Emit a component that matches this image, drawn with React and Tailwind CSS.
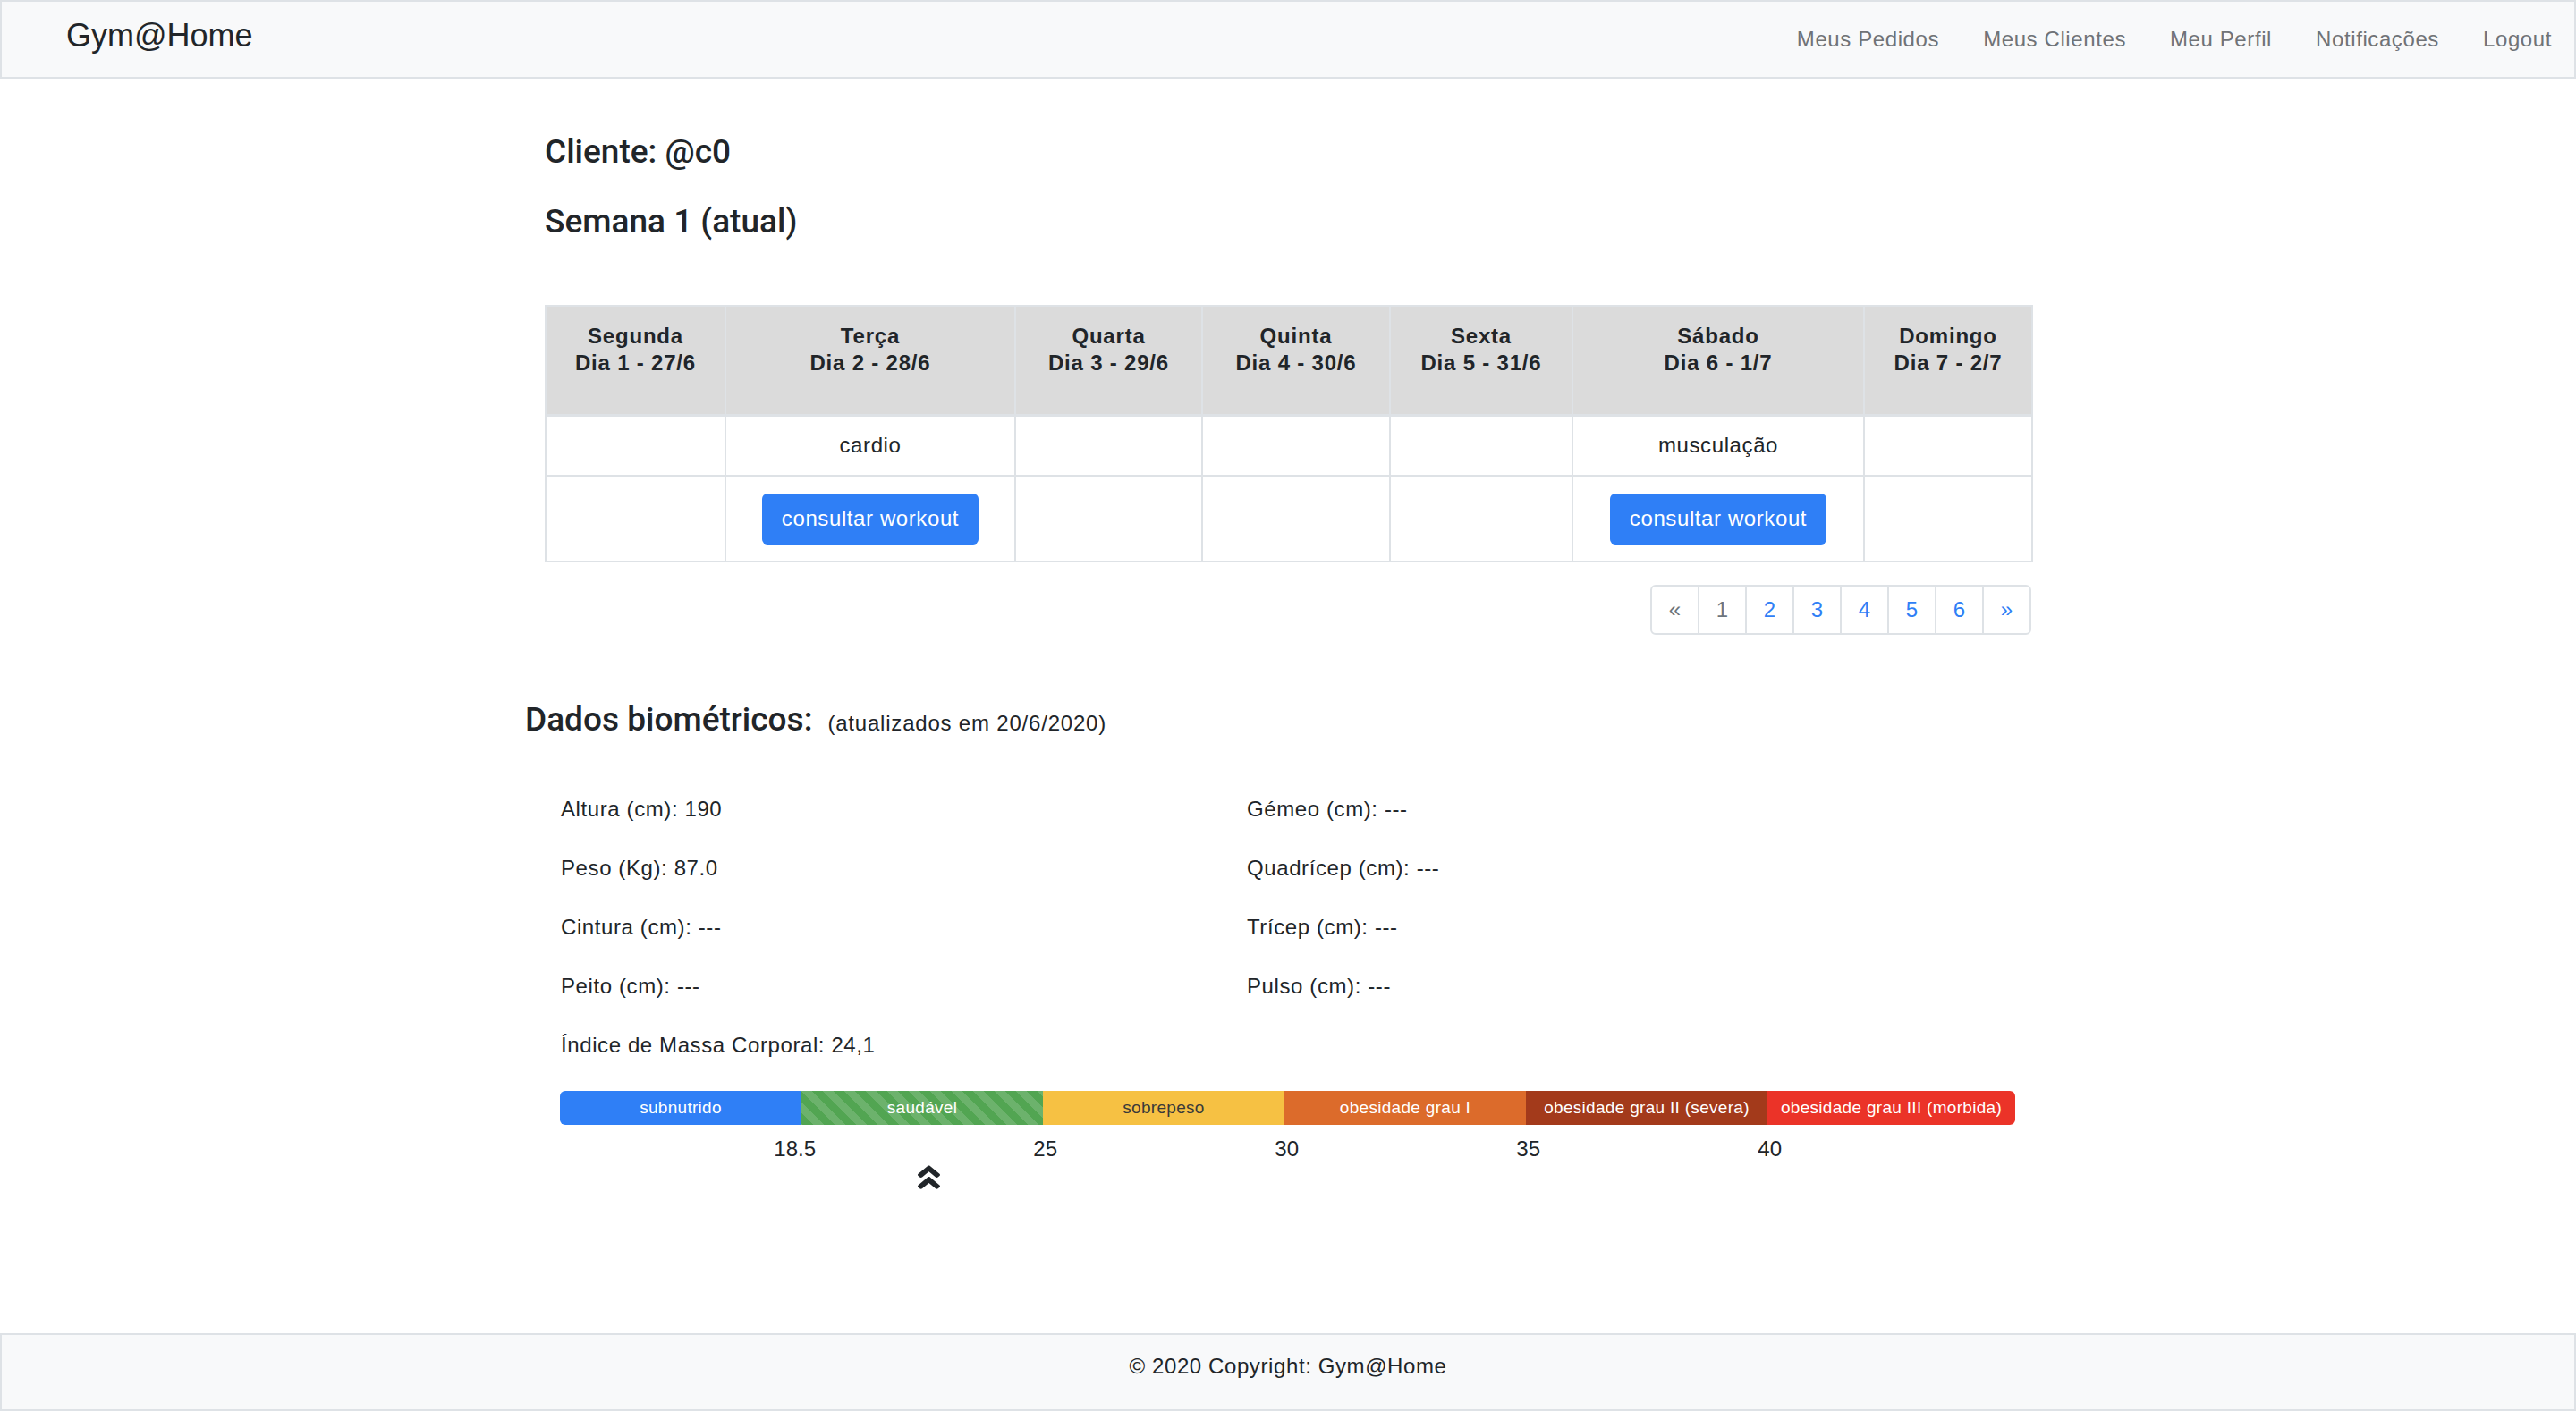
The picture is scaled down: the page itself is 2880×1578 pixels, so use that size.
import React from 'react';

const days = [
  { name: 'Segunda', label: 'Dia 1 - 27/6', type: '', w: 'w-[201px]' },
  { name: 'Terça', label: 'Dia 2 - 28/6', type: 'cardio', w: 'w-[324px]' },
  { name: 'Quarta', label: 'Dia 3 - 29/6', type: '', w: 'w-[209px]' },
  { name: 'Quinta', label: 'Dia 4 - 30/6', type: '', w: 'w-[210px]' },
  { name: 'Sexta', label: 'Dia 5 - 31/6', type: '', w: 'w-[204px]' },
  { name: 'Sábado', label: 'Dia 6 - 1/7', type: 'musculação', w: 'w-[326px]' },
  { name: 'Domingo', label: 'Dia 7 - 2/7', type: '', w: 'w-[188px]' },
];

const bioLeft = ['Altura (cm): 190', 'Peso (Kg): 87.0', 'Cintura (cm): ---', 'Peito (cm): ---', 'Índice de Massa Corporal: 24,1'];
const bioRight = ['Gémeo (cm): ---', 'Quadrícep (cm): ---', 'Trícep (cm): ---', 'Pulso (cm): ---'];

const stripes =
  'bg-[#52a552] bg-[image:linear-gradient(45deg,rgba(255,255,255,.15)_25%,transparent_25%,transparent_50%,rgba(255,255,255,.15)_50%,rgba(255,255,255,.15)_75%,transparent_75%,transparent)] bg-[length:24px_24px]';

const segments = [
  { label: 'subnutrido', cls: 'w-[270px] bg-[#2f7ff6] text-white' },
  { label: 'saudável', cls: `w-[270px] text-white ${stripes}` },
  { label: 'sobrepeso', cls: 'w-[270px] bg-[#f6c143] text-[#3a3a3a]' },
  { label: 'obesidade grau I', cls: 'w-[270px] bg-[#dc6b2b] text-white' },
  { label: 'obesidade grau II (severa)', cls: 'w-[270px] bg-[#a33a1b] text-white' },
  { label: 'obesidade grau III (morbida)', cls: 'w-[277px] bg-[#eb3328] text-white' },
];

const scale = ['18.5', '25', '30', '35', '40'];
const pages = ['«', '1', '2', '3', '4', '5', '6', '»'];

// heading font: medium weight, closer to the original system font
const heading = "font-['Roboto','Liberation_Sans',sans-serif] font-medium";

function DoubleUp() {
  return (
    <svg viewBox="0 50 320 410" preserveAspectRatio="none" className="w-[25px] h-[27px] ml-[400px]" fill="#212529">
      <path d="M177 255.7l136 136c9.4 9.4 9.4 24.6 0 33.9l-22.6 22.6c-9.4 9.4-24.6 9.4-33.9 0L160 351.9l-96.4 96.4c-9.4 9.4-24.6 9.4-33.9 0L7 425.7c-9.4-9.4-9.4-24.6 0-33.9l136-136c9.4-9.5 24.6-9.5 34-.1zm-34-192L7 199.7c-9.4 9.4-9.4 24.6 0 33.9l22.6 22.6c9.4 9.4 24.6 9.4 33.9 0l96.4-96.4 96.4 96.4c9.4 9.4 24.6 9.4 33.9 0l22.6-22.6c9.4-9.4 9.4-24.6 0-33.9l-136-136c-9.4-9.4-24.6-9.4-33.8 0z" />
    </svg>
  );
}

export default function App() {
  return (
    <div className="min-h-screen flex flex-col bg-white text-[#212529] font-['Liberation_Sans',Arial,sans-serif]">
      {/* navbar */}
      <nav className="h-[88px] shrink-0 border-2 border-[#dee2e6] bg-[#f8f9fa] flex items-center justify-between pl-[72px] pr-[25px]">
        <span className="text-[36px] leading-[44px] mb-[8px]">Gym@Home</span>
        <ul className="flex gap-[49px] text-[24px] tracking-[0.6px] text-[#707377]">
          <li>Meus Pedidos</li>
          <li>Meus Clientes</li>
          <li>Meu Perfil</li>
          <li>Notificações</li>
          <li>Logout</li>
        </ul>
      </nav>

      <main className="flex-1">
        <div className="w-[1662px] mx-auto pt-[60px]">
          <h4 className={`${heading} text-[37px] leading-[43px]`}>Cliente: @c0</h4>
          <h4 className={`${heading} text-[37px] leading-[43px] mt-[35px]`}>Semana 1 (atual)</h4>

          <table className="mt-[72px] w-[1662px] table-fixed border-collapse text-[24px] tracking-[0.6px]">
            <colgroup>
              {days.map((d) => (
                <col key={d.name} className={d.w} />
              ))}
            </colgroup>
            <thead>
              <tr>
                {days.map((d) => (
                  <th
                    key={d.name}
                    className="h-[122px] align-top pt-[18px] bg-[#dbdbdb] border-2 border-[#dee2e6] border-b-[3px] font-bold leading-[30px] tracking-[0.8px] text-center"
                  >
                    {d.name}
                    <br />
                    {d.label}
                  </th>
                ))}
              </tr>
            </thead>
            <tbody>
              <tr>
                {days.map((d) => (
                  <td key={d.name} className="h-[68px] border-2 border-[#dee2e6] text-center align-middle leading-[36px]">
                    {d.type}
                  </td>
                ))}
              </tr>
              <tr>
                {days.map((d) => (
                  <td key={d.name} className="h-[96px] border-2 border-[#dee2e6] text-center align-middle">
                    {d.type && (
                      <button className="w-[242px] h-[57px] rounded-[6px] bg-[#2f7ff6] text-white text-[24px] tracking-[0.6px] leading-[36px]">
                        consultar workout
                      </button>
                    )}
                  </td>
                ))}
              </tr>
            </tbody>
          </table>

          <div className="flex justify-end mt-[25px]">
            <div className="flex">
              {pages.map((p, i) => (
                <span
                  key={p}
                  className={`w-[55px] h-[56px] flex items-center justify-center border-2 border-[#dee2e6] bg-white text-[24px] ${
                    i > 0 ? '-ml-[2px]' : 'rounded-l-[6px]'
                  } ${i === pages.length - 1 ? 'rounded-r-[6px]' : ''} ${i < 2 ? 'text-[#6c757d]' : 'text-[#2f7ff6]'}`}
                >
                  {p}
                </span>
              ))}
            </div>
          </div>

          <div className="-ml-[22px] mt-[74px] flex items-baseline gap-[17px]">
            <h4 className={`${heading} text-[37px] leading-[42px]`}>Dados biométricos:</h4>
            <span className="text-[24px] tracking-[0.8px]">(atualizados em 20/6/2020)</span>
          </div>

          <div className="ml-[18px] mt-[60px] grid grid-cols-[767px_1fr] text-[24px] tracking-[0.6px] leading-[36px]">
            <div className="flex flex-col gap-[30px]">
              {bioLeft.map((t) => (
                <p key={t}>{t}</p>
              ))}
            </div>
            <div className="flex flex-col gap-[30px]">
              {bioRight.map((t) => (
                <p key={t}>{t}</p>
              ))}
            </div>
          </div>

          <div className="ml-[17px] mt-[33px] w-[1627px]">
            <div className="flex h-[38px] rounded-[6px] overflow-hidden text-[19px] tracking-[0.3px]">
              {segments.map((s) => (
                <div key={s.label} className={`${s.cls} flex items-center justify-center`}>
                  {s.label}
                </div>
              ))}
            </div>
            <div className="flex mt-[9px] text-[24px] leading-[36px]">
              {scale.map((v) => (
                <div key={v} className="w-[270px] text-right translate-x-[16px]">
                  {v}
                </div>
              ))}
            </div>
            <DoubleUp />
          </div>
        </div>
      </main>

      <footer className="h-[87px] shrink-0 border-2 border-[#dee2e6] bg-[#f8f9fa] pt-[17px] text-center text-[24px] leading-[36px] tracking-[0.6px]">
        © 2020 Copyright: Gym@Home
      </footer>
    </div>
  );
}
